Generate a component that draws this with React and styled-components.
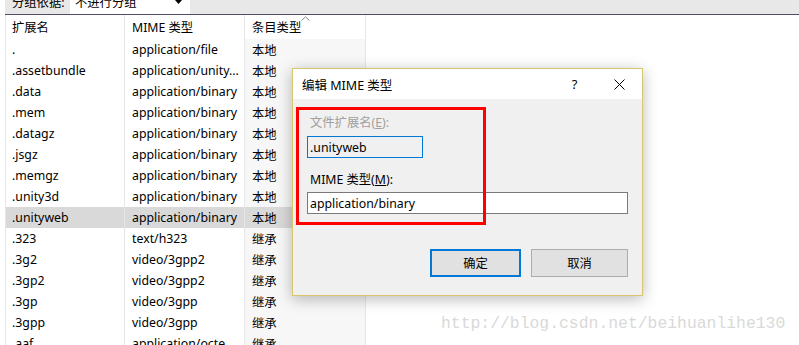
import React from 'react';
import styled, { createGlobalStyle } from 'styled-components';

const GlobalStyle = createGlobalStyle`
    html, body {
        margin: 0;
        padding: 0;
        background: #ffffff;
    }
    body {
        font-family: "Noto Sans", "Noto Sans CJK SC", sans-serif;
        font-size: 12.3px;
        color: #000;
    }
`;

const Screen = styled.div`
    position: relative;
    width: 799px;
    height: 345px;
    overflow: hidden;
    background: #fff;
`;

const GroupBar = styled.div`
    margin-left: 5px;
    height: 14px;
    background: #e8e8e8;
    border-bottom: 1px solid #4f4d6e;
    overflow: hidden;
    display: flex;
    align-items: flex-end;
`;

const GroupRow = styled.div`
    height: 24px;
    display: flex;
    align-items: center;
    flex-shrink: 0;
`;

const GroupLabel = styled.span`
    padding-left: 7px;
    width: 58px;
`;

const GroupSelect = styled.div`
    width: 120px;
    height: 24px;
    background: #fff;
    display: flex;
    align-items: center;
    justify-content: space-between;
    padding: 0 8px 0 5px;
    box-sizing: border-box;
`;

const ListPane = styled.div`
    margin-left: 5px;
    width: 361px;
`;

const Row = styled.div`
    display: grid;
    grid-template-columns: 120px 120px 121px;
    height: ${p => (p.$header ? 24 : 21)}px;
    background: ${p => (p.$selected ? '#d9d9d9' : 'transparent')};
`;

const Cell = styled.div`
    position: relative;
    display: flex;
    align-items: center;
    padding-left: ${p => (p.$first ? 6 : 7)}px;
    border-left: ${p => (p.$first ? '1px solid #e6e6e6' : 'none')};
    border-right: 1px solid #e6e6e6;
    white-space: nowrap;
    overflow: hidden;
    background: ${p => (p.$sorted ? (p.$selected ? '#d9d9d9' : '#f7f7f7') : 'transparent')};
`;

const SortArrow = styled.svg`
    position: absolute;
    top: 1px;
    left: 56px;
`;

const Dialog = styled.div`
    position: absolute;
    left: 292px;
    top: 68px;
    width: 351px;
    height: 228px;
    box-sizing: border-box;
    border: 1px solid #d8c56c;
    background: #f0f0f0;
    box-shadow: 0 3px 14px rgba(0, 0, 0, 0.28);
    display: flex;
    flex-direction: column;
`;

const TitleBar = styled.div`
    height: 30px;
    background: #fff;
    display: flex;
    align-items: center;
    padding-left: 9px;
    flex-shrink: 0;
`;

const Title = styled.span`
    flex: 1;
    font-size: 12.5px;
`;

const TitleButton = styled.span`
    width: 45px;
    display: flex;
    justify-content: center;
    align-items: center;
    font-size: 13px;
`;

const DialogBody = styled.div`
    flex: 1;
    display: flex;
    flex-direction: column;
    padding: 16px 14px 18px 14px;
    position: relative;
`;

const FieldLabel = styled.div`
    line-height: 16px;
    padding-left: 3px;
    color: ${p => (p.$disabled ? '#a0a0a0' : '#000')};
    margin-top: ${p => p.$top || 0}px;
`;

const Key = styled.span`
    text-decoration: underline;
`;

const TextBox = styled.div`
    margin-top: ${p => p.$top}px;
    width: ${p => p.$width}px;
    height: 22px;
    box-sizing: border-box;
    border: 1px solid ${p => (p.$focus ? '#0078d7' : '#7a7a7a')};
    background: ${p => (p.$focus ? '#f0f0f0' : '#fff')};
    display: flex;
    align-items: center;
    padding-left: 2px;
`;

const Annotation = styled.div`
    position: absolute;
    left: 3px;
    top: 8px;
    width: 190px;
    height: 118px;
    box-sizing: border-box;
    border: 3px solid #ff0000;
    pointer-events: none;
`;

const Buttons = styled.div`
    margin-top: auto;
    display: flex;
    justify-content: flex-end;
    gap: 10px;
`;

const Button = styled.button`
    width: ${p => p.$width}px;
    height: 28px;
    box-sizing: border-box;
    background: #e1e1e1;
    border: ${p => (p.$default ? '2px solid #0078d7' : '1px solid #adadad')};
    font-family: inherit;
    font-size: 12.3px;
    color: #000;
    padding: 0;
`;

const Watermark = styled.div`
    position: absolute;
    left: 441px;
    top: 314px;
    font-family: "Liberation Mono", "DejaVu Sans Mono", monospace;
    font-size: 16.4px;
    color: #d9d9d9;
    letter-spacing: 0;
`;

const rows = [
    ['.', 'application/file', '本地'],
    ['.assetbundle', 'application/unity...', '本地'],
    ['.data', 'application/binary', '本地'],
    ['.mem', 'application/binary', '本地'],
    ['.datagz', 'application/binary', '本地'],
    ['.jsgz', 'application/binary', '本地'],
    ['.memgz', 'application/binary', '本地'],
    ['.unity3d', 'application/binary', '本地'],
    ['.unityweb', 'application/binary', '本地'],
    ['.323', 'text/h323', '继承'],
    ['.3g2', 'video/3gpp2', '继承'],
    ['.3gp2', 'video/3gpp2', '继承'],
    ['.3gp', 'video/3gpp', '继承'],
    ['.3gpp', 'video/3gpp', '继承'],
    ['.aaf', 'application/octe...', '继承'],
];

export default function App() {
    return (
        <Screen>
            <GlobalStyle />
            <GroupBar>
                <GroupRow>
                    <GroupLabel>分组依据:</GroupLabel>
                    <GroupSelect>
                        <span>不进行分组</span>
                        <svg width="7" height="4" viewBox="0 0 7 4">
                            <path d="M0 0h7L3.5 4z" fill="#000" />
                        </svg>
                    </GroupSelect>
                </GroupRow>
            </GroupBar>
            <ListPane>
                <Row $header>
                    <Cell $first>扩展名</Cell>
                    <Cell>MIME 类型</Cell>
                    <Cell>
                        条目类型
                        <SortArrow width="9" height="5" viewBox="0 0 9 5">
                            <path d="M0.5 4.5L4.5 0.8L8.5 4.5" fill="none" stroke="#8a8a8a" strokeWidth="1" />
                        </SortArrow>
                    </Cell>
                </Row>
                {rows.map(([ext, mime, kind]) => {
                    const selected = ext === '.unityweb';
                    return (
                        <Row key={ext} $selected={selected}>
                            <Cell $first>{ext}</Cell>
                            <Cell>{mime}</Cell>
                            <Cell $sorted $selected={selected}>{kind}</Cell>
                        </Row>
                    );
                })}
            </ListPane>

            <Dialog>
                <TitleBar>
                    <Title>编辑 MIME 类型</Title>
                    <TitleButton>?</TitleButton>
                    <TitleButton>
                        <svg width="11" height="11" viewBox="0 0 11 11">
                            <path d="M0.5 0.5L10.5 10.5M10.5 0.5L0.5 10.5" stroke="#000" strokeWidth="1" />
                        </svg>
                    </TitleButton>
                </TitleBar>
                <DialogBody>
                    <FieldLabel $disabled>文件扩展名(<Key>E</Key>):</FieldLabel>
                    <TextBox $focus $top={5} $width={116}>.unityweb</TextBox>
                    <FieldLabel $top={14}>MIME 类型(<Key>M</Key>):</FieldLabel>
                    <TextBox $top={4} $width={321}>application/binary</TextBox>
                    <Annotation />
                    <Buttons>
                        <Button $default $width={91}>确定</Button>
                        <Button $width={97}>取消</Button>
                    </Buttons>
                </DialogBody>
            </Dialog>

            <Watermark>http://blog.csdn.net/beihuanlihe130</Watermark>
        </Screen>
    );
}
